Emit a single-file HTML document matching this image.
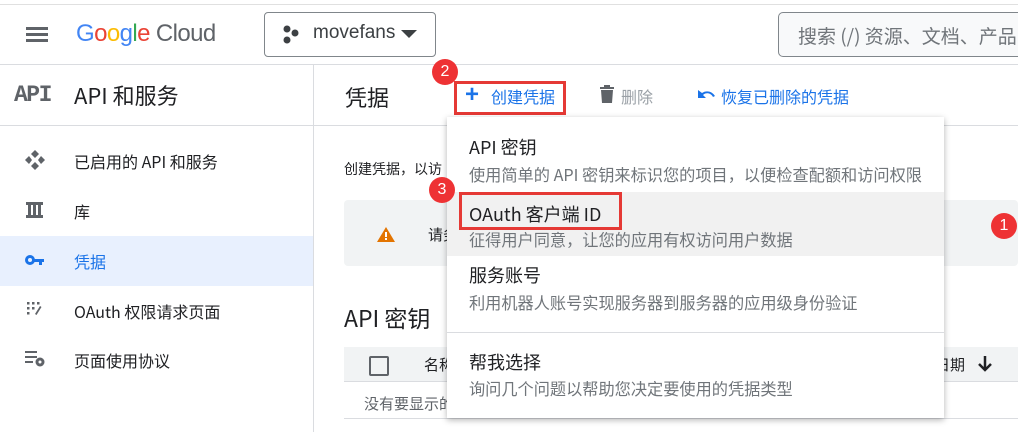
<!DOCTYPE html>
<html><head><meta charset="utf-8"><style>
*{box-sizing:border-box;margin:0;padding:0}
body{width:1018px;height:432px;overflow:hidden;background:#fff;font-family:"Liberation Sans","Noto Sans CJK SC",sans-serif;color:#202124;position:relative}
.a{position:absolute}
.cj{font-family:"Noto Sans CJK SC","Liberation Sans",sans-serif}
.badge{position:absolute;width:26px;height:26px;border-radius:50%;background:#ee3234;color:#fff;font-size:16px;text-align:center;line-height:26px}
.red{position:absolute;border:3px solid #e53935}
</style></head><body>
<div class="a" style="left:0;top:4px;width:1018px;height:1px;background:#e0e0e0"></div>
<div class="a" style="left:0;top:64px;width:1018px;height:1px;background:#dadce0"></div>
<div class="a" style="left:26px;top:27px;width:22px;height:3px;background:#5f6368"></div>
<div class="a" style="left:26px;top:33px;width:22px;height:3px;background:#5f6368"></div>
<div class="a" style="left:26px;top:39px;width:22px;height:3px;background:#5f6368"></div>
<div class="a" style="left:76px;top:20px;font-size:24px;letter-spacing:-0.6px"><span style="color:#4285f4">G</span><span style="color:#ea4335">o</span><span style="color:#fbbc05">o</span><span style="color:#4285f4">g</span><span style="color:#34a853">l</span><span style="color:#ea4335">e</span> <span style="color:#5f6368">Cloud</span></div>
<div class="a" style="left:264px;top:12px;width:172px;height:45px;border:1px solid #80868b;border-radius:4px"></div>
<svg class="a" style="left:282px;top:25px" width="18" height="20"><circle cx="5" cy="4" r="3.5" fill="#3c4043"/><circle cx="13" cy="8" r="3.5" fill="#3c4043"/><circle cx="5" cy="15" r="3.5" fill="#3c4043"/></svg>
<div class="a" style="left:313px;top:22px;font-size:19px;color:#3c4043">movefans</div>
<svg class="a" style="left:401px;top:30px" width="16" height="9"><path d="M0 0H16L8 8Z" fill="#3c4043"/></svg>
<div class="a" style="left:778px;top:12px;width:260px;height:45px;border:1px solid #80868b;border-radius:5px;background:#f8f9fa"></div>
<div class="a cj" style="left:798px;top:22px;font-size:19px;color:#70757a;white-space:nowrap">搜索 (/) 资源、文档、产品</div>
<div class="a" style="left:313px;top:65px;width:1px;height:367px;background:#dadce0"></div>
<div class="a" style="left:0;top:125px;width:1018px;height:1px;background:#dadce0"></div>
<div class="a" style="left:14px;top:82px;font-family:'Liberation Mono',monospace;font-weight:bold;font-size:23px;color:#5f6368;letter-spacing:-1.5px">API</div>
<div class="a cj" style="left:74px;top:79px;font-size:22px;color:#202124">API 和服务</div>
<svg class="a" style="left:25px;top:150px" width="20" height="20"><g fill="#5f6368"><path d="M10 0l4 4-4 4-4-4z"/><path d="M10 12l4 4-4 4-4-4z"/><path d="M0 10l4-4 3 4-3 4z"/><path d="M20 10l-4-4-3 4 3 4z"/></g></svg>
<div class="a cj" style="left:74px;top:149px;font-size:16px">已启用的 API 和服务</div>
<div class="a" style="left:26px;top:202px;width:17px;height:3px;background:#5f6368"></div>
<div class="a" style="left:26px;top:215px;width:17px;height:3px;background:#5f6368"></div>
<div class="a" style="left:28px;top:202px;width:3px;height:15px;background:#5f6368"></div>
<div class="a" style="left:33px;top:202px;width:3px;height:15px;background:#5f6368"></div>
<div class="a" style="left:38px;top:202px;width:3px;height:15px;background:#5f6368"></div>
<div class="a cj" style="left:74px;top:199px;font-size:16px">库</div>
<div class="a" style="left:0;top:236px;width:313px;height:50px;background:#e8f0fe"></div>
<svg class="a" style="left:25px;top:254px" width="20" height="12"><circle cx="5" cy="6" r="3.5" fill="none" stroke="#1a73e8" stroke-width="3"/><path d="M8 5h11v3h-2v3h-3v-3h-6z" fill="#1a73e8"/></svg>
<div class="a cj" style="left:74px;top:249px;font-size:16px;color:#1a73e8">凭据</div>
<svg class="a" style="left:26px;top:301px" width="16" height="16"><g fill="#5f6368"><rect x="1" y="1" width="2.5" height="2.5"/><rect x="6" y="1" width="2.5" height="2.5"/><rect x="11" y="1" width="2.5" height="2.5"/><rect x="1" y="6" width="2.5" height="2.5"/><rect x="6" y="6" width="2.5" height="2.5"/><rect x="1" y="11" width="2.5" height="2.5"/><path d="M14 5l1.5 1-5 8-1.5-1z"/></g></svg>
<div class="a cj" style="left:74px;top:299px;font-size:16px">OAuth 权限请求页面</div>
<svg class="a" style="left:25px;top:351px" width="20" height="16"><g fill="#5f6368"><rect x="0" y="0" width="12" height="2"/><rect x="0" y="5" width="12" height="2"/><rect x="0" y="10" width="8" height="2"/><circle cx="15" cy="11" r="4.5"/></g><circle cx="15" cy="11" r="1.5" fill="#fff"/></svg>
<div class="a cj" style="left:74px;top:348px;font-size:16px">页面使用协议</div>
<div class="a cj" style="left:345px;top:81px;font-size:22px">凭据</div>
<div class="a" style="left:465px;top:84px;font-size:24px;color:#1a73e8;font-weight:bold;line-height:22px">+</div>
<div class="a cj" style="left:491px;top:84px;font-size:16px;color:#1a73e8">创建凭据</div>
<div class="red" style="left:454px;top:81px;width:112px;height:34px"></div>
<svg class="a" style="left:599px;top:85px" width="16" height="18"><path d="M1 2h14v2H1z M5 0h6v2H5z M2 5h12l-1 13H3z" fill="#5f6368"/></svg>
<div class="a cj" style="left:621px;top:84px;font-size:16px;color:#9aa0a6">删除</div>
<svg class="a" style="left:696px;top:87px" width="20" height="14"><path d="M2 3v8h8l-3-3c3-3 8-2 10 2l2-1c-3-5-9-6-13-3z" fill="#1a73e8"/></svg>
<div class="a cj" style="left:721px;top:84px;font-size:16px;color:#1a73e8">恢复已删除的凭据</div>
<div class="badge" style="left:432px;top:59px">2</div>
<div class="a cj" style="left:344px;top:159px;font-size:14px">创建凭据，以访</div>
<div class="a" style="left:344px;top:200px;width:674px;height:66px;background:#f1f3f4;border-radius:4px"></div>
<svg class="a" style="left:377px;top:227px" width="18" height="15"><path d="M9 0L18 15H0Z" fill="#e37400"/><rect x="8" y="5" width="2" height="5" fill="#fff"/><rect x="8" y="11" width="2" height="2" fill="#fff"/></svg>
<div class="a cj" style="left:428px;top:224px;font-size:15px">请务</div>
<div class="a cj" style="left:344px;top:300px;font-size:23px">API 密钥</div>
<div class="a" style="left:344px;top:347px;width:674px;height:35px;background:#f1f3f4;border-bottom:1px solid #dadce0"></div>
<div class="a" style="left:369px;top:356px;width:20px;height:20px;border:2px solid #5f6368;border-radius:2px"></div>
<div class="a cj" style="left:424px;top:354px;font-size:15px">名称</div>
<div class="a cj" style="left:935px;top:354px;font-size:15px">日期</div>
<svg class="a" style="left:977px;top:355px" width="16" height="18"><path d="M8 1v14M2 9l6 6 6-6" fill="none" stroke="#202124" stroke-width="2.5"/></svg>
<div class="a cj" style="left:364px;top:393px;font-size:15px;color:#5f6368">没有要显示的</div>
<div class="a" style="left:344px;top:418px;width:674px;height:1px;background:#dadce0"></div>
<div class="badge" style="left:991px;top:213px">1</div>
<div class="a" style="left:447px;top:117px;width:497px;height:301px;background:#fff;box-shadow:0 2px 6px rgba(0,0,0,.3)">
 <div class="a cj" style="left:22px;top:17px;font-size:18px">API 密钥</div>
 <div class="a cj" style="left:22px;top:45px;font-size:16.2px;color:#70757a;white-space:nowrap">使用简单的 API 密钥来标识您的项目，以便检查配额和访问权限</div>
 <div class="a" style="left:0;top:75px;width:497px;height:64px;background:#f1f1f1"></div>
 <div class="a cj" style="left:22px;top:84px;font-size:18px">OAuth 客户端 ID</div>
 <div class="a cj" style="left:22px;top:110px;font-size:16.2px;color:#70757a;white-space:nowrap">征得用户同意，让您的应用有权访问用户数据</div>
 <div class="a cj" style="left:22px;top:145px;font-size:18px">服务账号</div>
 <div class="a cj" style="left:22px;top:173px;font-size:16.2px;color:#70757a;white-space:nowrap">利用机器人账号实现服务器到服务器的应用级身份验证</div>
 <div class="a" style="left:0;top:215px;width:497px;height:1px;background:#dadce0"></div>
 <div class="a cj" style="left:22px;top:232px;font-size:18px">帮我选择</div>
 <div class="a cj" style="left:22px;top:259px;font-size:16.2px;color:#70757a;white-space:nowrap">询问几个问题以帮助您决定要使用的凭据类型</div>
</div>
<div class="red" style="left:459px;top:192px;width:163px;height:38px"></div>
<div class="badge" style="left:429px;top:177px">3</div>
</body></html>
